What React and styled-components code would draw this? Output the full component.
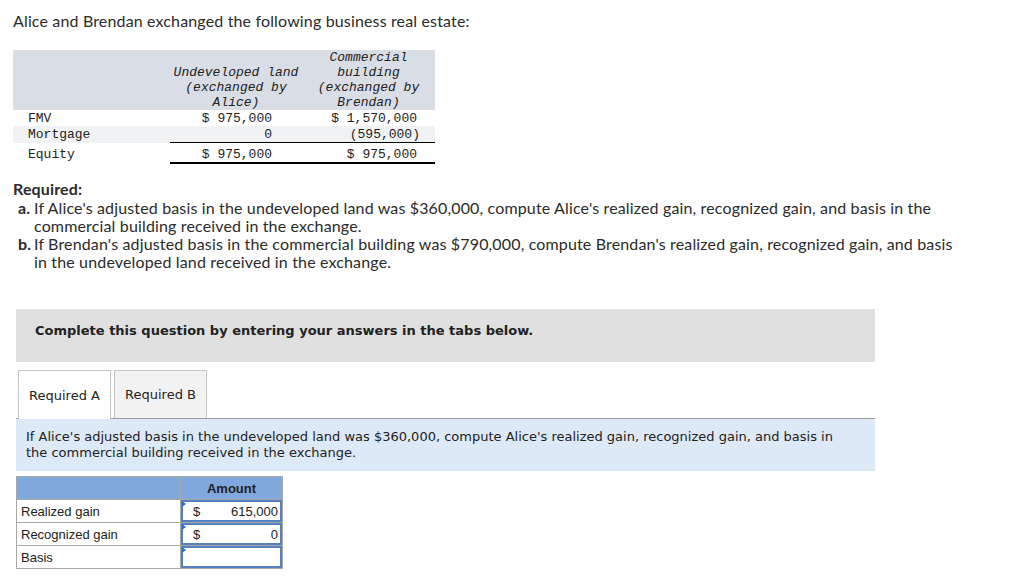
import React from 'react';
import styled, { createGlobalStyle } from 'styled-components';

const GlobalStyle = createGlobalStyle`
  html, body {
    margin: 0;
    padding: 0;
    background: #fff;
  }
  body {
    font-family: Lato, "Open Sans", sans-serif;
    color: #2b2b2b;
  }
`;

const Page = styled.div`
  width: 1024px;
  height: 579px;
  box-sizing: border-box;
  padding: 12px 0 0 13px;
  overflow: hidden;
`;

const Intro = styled.p`
  margin: 0;
  font-size: 16px;
  line-height: 18px;
  letter-spacing: 0.15px;
`;

// fact table (monospace)
const FactTable = styled.table`
  margin-top: 20px;
  border-collapse: collapse;
  font-family: "Liberation Mono", "DejaVu Sans Mono", monospace;
  font-size: 13px;
  color: #222;
`;

const HeadRow = styled.tr`
  background: #d9dde5;
`;

const HeadCell = styled.th`
  width: ${(p) => p.$w}px;
  padding: 0;
  font-weight: normal;
  font-style: italic;
  line-height: 15px;
  text-align: center;
  vertical-align: bottom;
`;

const Row = styled.tr`
  background: ${(p) => (p.$shade ? '#f1f2f4' : 'transparent')};
`;

const Label = styled.td`
  padding: ${(p) => 2 + (p.$top || 0)}px 0 0 15px;
  height: 14px;
  line-height: 14px;
  text-align: left;
`;

const Value = styled.td`
  padding: ${(p) => 2 + (p.$top || 0)}px ${(p) => p.$pr}px 0 0;
  height: 14px;
  line-height: 14px;
  text-align: right;
  white-space: pre;
  border-bottom: ${(p) => (p.$rule ? `${p.$rule}px solid #000` : 'none')};
`;

const Hang = styled.span`
  margin-right: -3px;
`;

// required text
const Required = styled.div`
  margin-top: 16px;
  width: 948px;
  font-size: 16px;
  line-height: 18px;
  letter-spacing: 0.15px;
`;

const ReqTitle = styled.div`
  font-weight: bold;
`;

const Item = styled.div`
  display: flex;
  margin-top: ${(p) => (p.$first ? '1px' : '0')};
`;

const Marker = styled.span`
  flex: 0 0 21px;
  box-sizing: border-box;
  padding-left: 5px;
  font-weight: bold;
`;

const ItemText = styled.span`
  flex: 1;
`;

// workspace
const Workspace = styled.div`
  margin: 38px 0 0 3px;
  width: 859px;
  font-family: "DejaVu Sans", Verdana, sans-serif;
  font-size: 13px;
  color: #222;
`;

const Prompt = styled.div`
  height: 53px;
  box-sizing: border-box;
  padding: 14px 0 0 19px;
  background: #e0e0e0;
  font-weight: bold;
  line-height: 16px;
`;

const TabBar = styled.div`
  display: flex;
  gap: 3px;
  margin-top: 8px;
  padding-left: 2px;
  border-bottom: 1px solid #9c9c9c;
`;

const Tab = styled.div`
  width: 93px;
  box-sizing: border-box;
  display: flex;
  align-items: center;
  justify-content: center;
  border: 1px solid #c4c4c4;
  border-bottom: none;
  background: ${(p) => (p.$active ? '#fff' : '#f2f2f2')};
  margin-bottom: ${(p) => (p.$active ? '-1px' : '0')};
  height: ${(p) => (p.$active ? '49px' : '48px')};
  padding-top: ${(p) => (p.$active ? '1px' : '0')};
`;

const Instruction = styled.div`
  background: #dde9f7;
  padding: 10px 20px 10px 10px;
  line-height: 16px;
  min-height: 31px;
`;

// answer table
const AnswerTable = styled.table`
  margin-top: 5px;
  border-collapse: collapse;
  font-family: "Liberation Sans", Arial, sans-serif;
  font-size: 13px;
  color: #222;
`;

const AnsHead = styled.th`
  width: ${(p) => p.$w}px;
  height: 22px;
  padding: 0;
  background: #80a8dd;
  border: 1px solid #a8a8a8;
  font-weight: bold;
  text-align: center;
`;

const AnsLabel = styled.td`
  height: 22px;
  padding: 0 0 0 4px;
  border: 1px solid #a8a8a8;
`;

const AnsCell = styled.td`
  position: relative;
  height: 22px;
  padding: 0;
  border: 1px solid #a8a8a8;
`;

const Entry = styled.div`
  height: 22px;
  box-sizing: border-box;
  display: flex;
  align-items: center;
  justify-content: space-between;
  padding: 0 2px 0 10px;
  border: 2px solid #5480c0;
`;

const Flag = styled.span`
  position: absolute;
  left: 1px;
  top: 1px;
  width: 0;
  height: 0;
  border-top: 3px solid transparent;
  border-bottom: 3px solid transparent;
  border-left: 4px solid #2f6fc7;
`;

const answers = [
  { label: 'Realized gain', value: '615,000', dollar: true },
  { label: 'Recognized gain', value: '0', dollar: true },
  { label: 'Basis', value: '', dollar: false },
];

export default function App() {
  return (
    <Page>
      <GlobalStyle />
      <Intro>Alice and Brendan exchanged the following business real estate:</Intro>

      <FactTable>
        <thead>
          <HeadRow>
            <HeadCell $w={157}></HeadCell>
            <HeadCell $w={132}>Undeveloped land (exchanged by Alice)</HeadCell>
            <HeadCell $w={133}>Commercial building (exchanged by Brendan)</HeadCell>
          </HeadRow>
        </thead>
        <tbody>
          <Row>
            <Label>FMV</Label>
            <Value $pr={30}>$ 975,000</Value>
            <Value $pr={18}>$ 1,570,000</Value>
          </Row>
          <Row $shade>
            <Label>Mortgage</Label>
            <Value $pr={30} $rule={1}>0</Value>
            <Value $pr={18} $rule={1}>(595,000<Hang>)</Hang></Value>
          </Row>
          <Row>
            <Label $top={3}>Equity</Label>
            <Value $pr={30} $top={3} $rule={2}>$ 975,000</Value>
            <Value $pr={18} $top={3} $rule={2}>$ 975,000</Value>
          </Row>
        </tbody>
      </FactTable>

      <Required>
        <ReqTitle>Required:</ReqTitle>
        <Item $first>
          <Marker>a.</Marker>
          <ItemText>
            If Alice's adjusted basis in the undeveloped land was $360,000, compute Alice's realized gain,
            recognized gain, and basis in the commercial building received in the exchange.
          </ItemText>
        </Item>
        <Item>
          <Marker>b.</Marker>
          <ItemText>
            If Brendan's adjusted basis in the commercial building was $790,000, compute Brendan's realized
            gain, recognized gain, and basis in the undeveloped land received in the exchange.
          </ItemText>
        </Item>
      </Required>

      <Workspace>
        <Prompt>Complete this question by entering your answers in the tabs below.</Prompt>

        <TabBar>
          <Tab $active>Required A</Tab>
          <Tab>Required B</Tab>
        </TabBar>

        <Instruction>
          If Alice's adjusted basis in the undeveloped land was $360,000, compute Alice's realized gain,
          recognized gain, and basis in the commercial building received in the exchange.
        </Instruction>

        <AnswerTable>
          <thead>
            <tr>
              <AnsHead $w={163}></AnsHead>
              <AnsHead $w={101}>Amount</AnsHead>
            </tr>
          </thead>
          <tbody>
            {answers.map((a) => (
              <tr key={a.label}>
                <AnsLabel>{a.label}</AnsLabel>
                <AnsCell>
                  <Flag />
                  <Entry>
                    <span>{a.dollar ? '$' : ''}</span>
                    <span>{a.value}</span>
                  </Entry>
                </AnsCell>
              </tr>
            ))}
          </tbody>
        </AnswerTable>
      </Workspace>
    </Page>
  );
}
